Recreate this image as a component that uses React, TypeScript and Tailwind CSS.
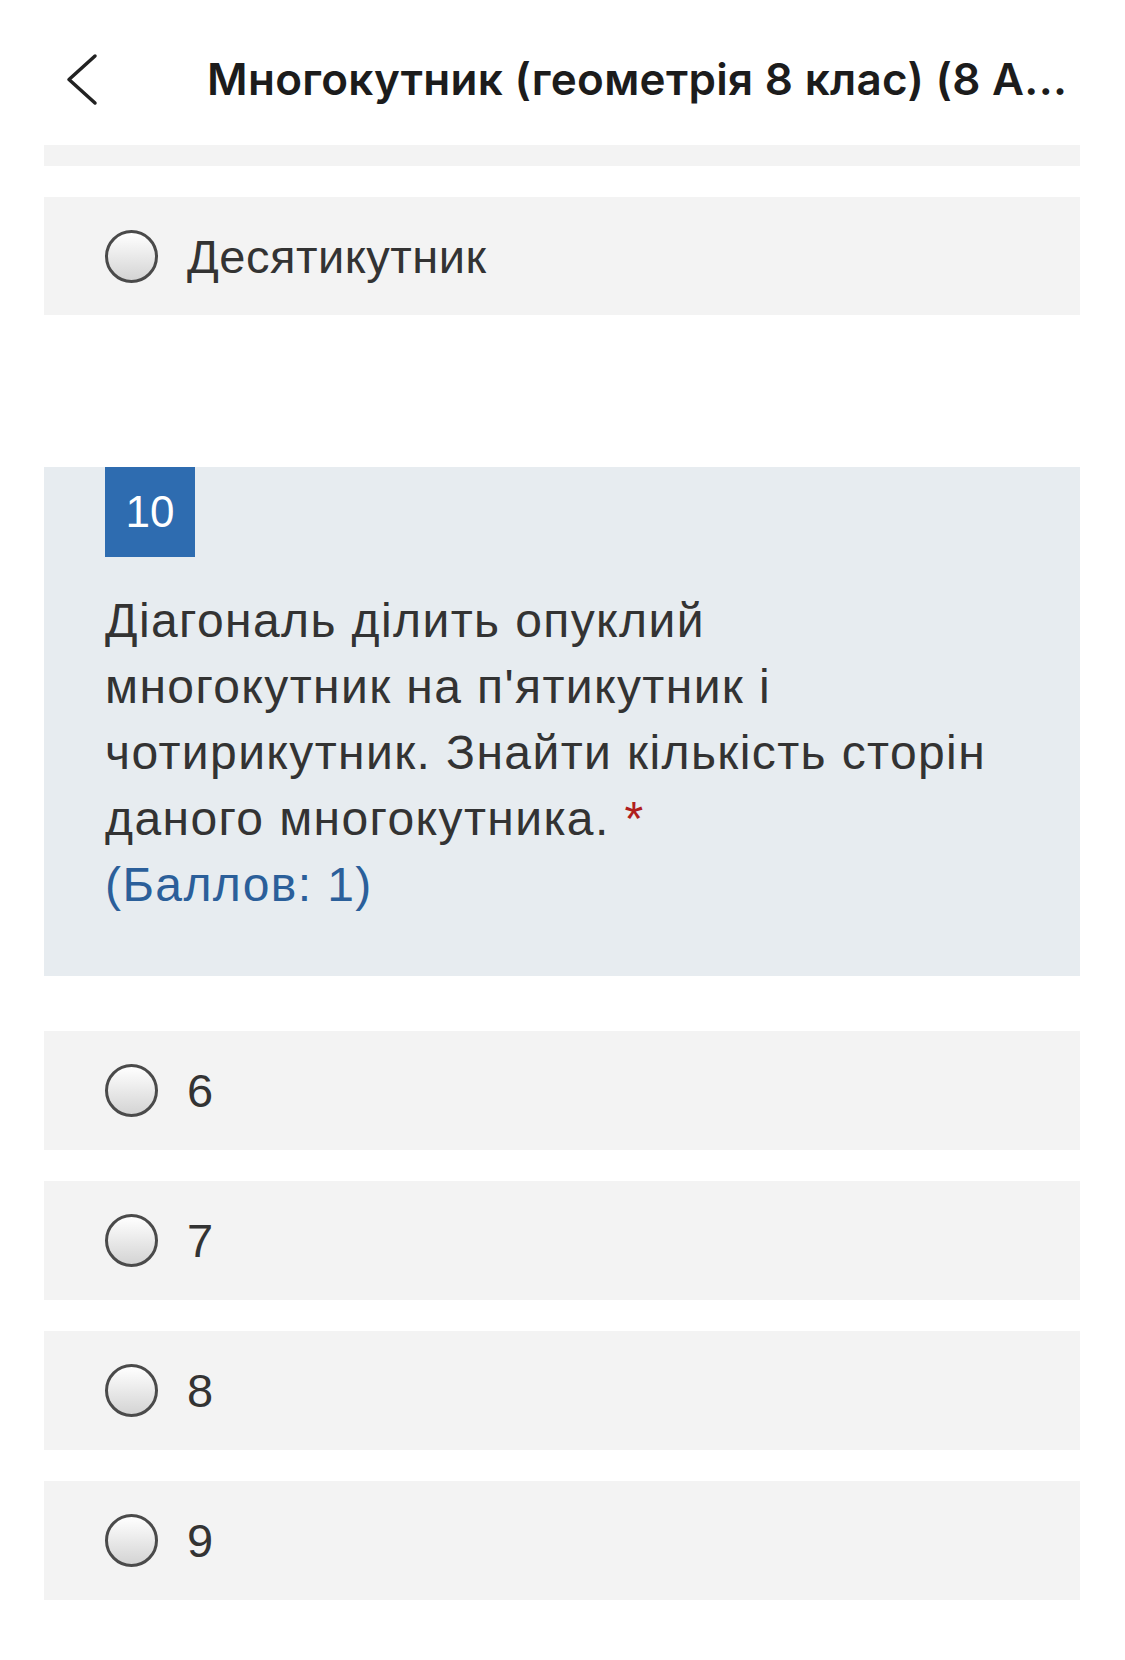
const OPTIONS = ["6", "7", "8", "9"];

function Radio() {
  return (
    <span className="block h-[53px] w-[53px] shrink-0 rounded-full border-[3px] border-[#4a4a4a] bg-linear-to-b from-white to-[#d4d4d4]" />
  );
}

function Option({ label }: { label: string }) {
  return (
    <div className="flex h-[119px] items-center gap-[29px] bg-[#f3f3f3] pl-[61px]">
      <Radio />
      <span className="text-[47px] leading-none tracking-[0.5px] text-[#333]">{label}</span>
    </div>
  );
}

export default function App() {
  return (
    <div className="min-h-[1660px] w-[1125px] bg-white font-['Liberation_Sans',Arial,sans-serif]">
      {/* HEADER */}
      <header className="flex h-[145px] items-center pt-[12px]">
        <svg width="40" height="60" viewBox="0 0 40 60" className="ml-[62px] shrink-0">
          <polyline
            points="33,7 7,30.5 33,54"
            fill="none"
            stroke="#222"
            strokeWidth="3.5"
            strokeLinecap="round"
            strokeLinejoin="round"
          />
        </svg>
        <h1 className="ml-[105px] whitespace-nowrap font-['Inter',sans-serif] text-[44px] font-semibold tracking-[0.3px] text-[#1c1c1c]">
          Многокутник (геометрія 8 клас) (8 А...
        </h1>
      </header>

      <main className="ml-[44px] flex w-[1036px] flex-col">
        <div className="h-[21px] bg-[#f3f3f3]" />

        <div className="mt-[31px] flex h-[118px] items-center gap-[29px] bg-[#f3f3f3] pl-[61px]">
          <Radio />
          <span className="text-[47px] leading-none tracking-[0.5px] text-[#333]">Десятикутник</span>
        </div>

        {/* QUESTION */}
        <section className="mt-[152px] bg-[#e7ecf0] pb-[58px] pl-[61px] pr-[40px]">
          <div className="flex h-[90px] w-[90px] items-center justify-center bg-[#2e6cb0] text-[44px] text-white">
            10
          </div>
          <p className="mt-[31px] whitespace-nowrap text-[48px] leading-[66px] tracking-[1.4px] text-[#333]">
            Діагональ ділить опуклий
            <br />
            многокутник на п'ятикутник і
            <br />
            чотирикутник. Знайти кількість сторін
            <br />
            даного многокутника. <span className="text-[#b01e1e]">*</span>
          </p>
          <p className="text-[48px] leading-[66px] tracking-[1.4px] text-[#2b5f9a]">(Баллов: 1)</p>
        </section>

        <div className="mt-[55px] flex flex-col gap-[31px]">
          {OPTIONS.map((o) => (
            <Option key={o} label={o} />
          ))}
        </div>
      </main>
    </div>
  );
}
